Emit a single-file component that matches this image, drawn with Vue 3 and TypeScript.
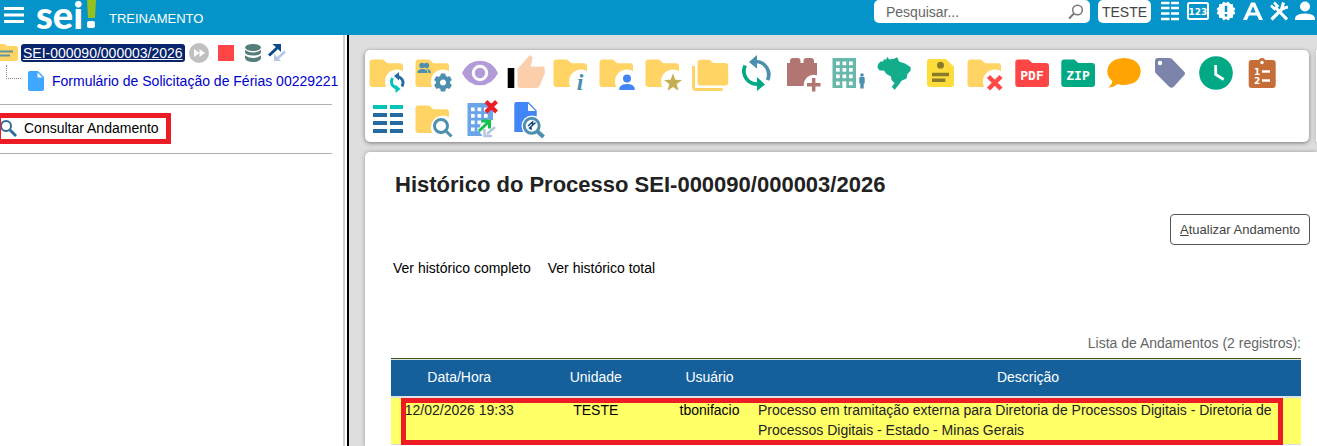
<script setup lang="ts">
import { ref } from 'vue'

interface HistoryEntry {
  date: string
  unit: string
  user: string
  description: string
}

const search = ref('')

const entries: HistoryEntry[] = [
  {
    date: '12/02/2026 19:33',
    unit: 'TESTE',
    user: 'tbonifacio',
    description:
      'Processo em tramitação externa para Diretoria de Processos Digitais - Diretoria de Processos Digitais - Estado - Minas Gerais',
  },
]

const folder = 'M7.5 9.5h9.5q1.5 0 2.5 1.2l2.8 2.6H35q3 0 3 3V34q0 3-3 3H7.5q-3 0-3-3V12.500q0-3 3-3z'

const gearTeeth = [0, 60, 120, 180, 240, 300]
const sealTeeth = [0, 30, 60]
const windowRows = [11.500, 18, 24.500, 31.500]
const windowCols = [11, 17.500, 24]

const tools: string[] = [
  'Iniciar Processo Relacionado',
  'Consultar/Alterar Processo',
  'Acompanhamento Especial',
  'Ciência',
  'Informações',
  'Atribuir Processo',
  'Favoritos',
  'Duplicar Processo',
  'Atualizar Processo',
  'Adicionar Módulo',
  'Enviar Processo',
  'Processo Federal',
  'Anotações',
  'Concluir Processo',
  'Gerar PDF',
  'Gerar ZIP',
  'Comentários',
  'Marcadores',
  'Controle de Prazo',
  'Lista de Tarefas',
  'Controle de Processos',
  'Pesquisar no Processo',
  'Cancelar Tramitação Externa',
  'Consultar Tramitação',
]
</script>

<template>
  <div class="page">
    <header class="topbar">
      <button class="plain" type="button" aria-label="Menu">
        <svg width="20" height="18" viewBox="0 0 20 18"><path d="M0 2.500h20M0 9h20M0 15.500h20" stroke="#fff" stroke-width="3" /></svg>
      </button>
      <a class="logo" href="#" aria-label="sei!">
        <span class="logo-word">sei</span>
        <svg width="9" height="29" viewBox="0 0 9 29"><path d="M0 0h9l-1 18H1z" fill="#95c11f" /><rect y="21" width="8" height="7" rx="2" fill="#fff" /></svg>
      </a>
      <span class="env">TREINAMENTO</span>
      <form class="search" role="search" @submit.prevent>
        <input v-model="search" type="text" placeholder="Pesquisar..." aria-label="Pesquisar" />
        <button class="plain" type="submit" aria-label="Buscar">
          <svg width="16" height="16" viewBox="0 0 16 16" fill="none" stroke="#777"><circle cx="9.500" cy="6" r="4.800" stroke-width="1.500" /><path d="M6 9.500l-5 5" stroke-width="2" /></svg>
        </button>
      </form>
      <button class="unit" type="button">TESTE</button>
      <nav class="top-icons">
        <button class="plain" type="button" aria-label="Controle de Processos">
          <svg width="19" height="20" viewBox="0 0 19 20"><path d="M0 2h8.500M10 2H18M0 7h8.500M10 7H18M0 12.500h8.500M10 12.500H18M0 18h8.500M10 18H18" stroke="#fff" stroke-width="2.600" /></svg>
        </button>
        <button class="plain" type="button" aria-label="Numeração">
          <svg width="22" height="20" viewBox="0 0 22 20"><rect x="1" y="2" width="20" height="16" rx="1.500" fill="none" stroke="#fff" stroke-width="2" /><text x="11" y="13.500" text-anchor="middle" class="digits">123</text></svg>
        </button>
        <button class="plain" type="button" aria-label="Novidades">
          <svg width="20" height="20" viewBox="0 0 20 20" fill="#fff"><rect v-for="a in sealTeeth" :key="a" x="3" y="3" width="14" height="14" rx="1" :transform="`rotate(${a} 10 10)`" /><path d="M10 4.800v6.200M10 13v2.500" stroke="#0494c9" stroke-width="2.500" /></svg>
        </button>
        <button class="plain" type="button" aria-label="Acessibilidade">
          <svg width="20" height="20" viewBox="0 0 20 20" fill="#fff"><path d="M8 1.500h4L20 19h-4l-2-4.500H6L4 19H0zM10 5.200L7.300 11.500h5.400z" fill-rule="evenodd" /></svg>
        </button>
        <button class="plain" type="button" aria-label="Configurações">
          <svg width="18" height="20" viewBox="0 0 18 20" fill="none" stroke="#fff"><path d="M5 6l12 12.500" stroke-width="3.200" /><path d="M1.500 18.500L13.500 6.500" stroke-width="3.200" /><path d="M1 4.500l3.500 3.500 3-3L4 1.500" stroke-width="2.500" /><path d="M13.500 1.500l-1.500 5 1 1 5-1.500" stroke-width="3" /></svg>
        </button>
        <button class="plain" type="button" aria-label="Usuário">
          <svg width="20" height="20" viewBox="0 0 20 20" fill="#fff"><circle cx="10" cy="5.500" r="5" /><path d="M0 19v-2Q1 12.500 10 12.500t10 4.500v2z" /></svg>
        </button>
      </nav>
    </header>

    <div class="body">
      <aside class="tree">
        <div class="process">
          <svg width="18" height="18" viewBox="0 0 18 18"><path d="M0 0h5l2 2h9q2 0 2 2v11q0 2-2 2H0z" fill="#ffd464" /><path d="M0 7.500h13M0 11.500h10" stroke="#5b93a8" stroke-width="2" /></svg>
          <a class="process-link" href="#">SEI-000090/000003/2026</a>
          <svg width="20" height="20" viewBox="0 0 20 20"><circle cx="10" cy="10" r="10" fill="#c0c0c0" /><path d="M5 6l5.500 4L5 14zM10.500 6l5.500 4-5.500 4z" fill="#fff" /></svg>
          <i class="stop"></i>
          <svg width="16" height="18" viewBox="0 0 16 18" fill="#557d79"><ellipse cx="8" cy="3.500" rx="8" ry="3.500" /><path d="M0 6q8 5 16 0v2.500q-1 3-8 3t-8-3zM0 11.500q8 5 16 0V14q-1 4-8 4t-8-4z" /></svg>
          <svg width="18" height="19" viewBox="0 0 18 19" fill="none"><path d="M17 8.500L9 16" stroke="#b4c6e2" stroke-width="2.500" /><path d="M6 18v-7l7 7z" fill="#b4c6e2" /><path d="M1 12.500l9-8.500" stroke="#0c4a8c" stroke-width="3" /><path d="M4.500 1H13v8z" fill="#0c4a8c" /></svg>
        </div>
        <div class="document">
          <i class="branch"></i>
          <svg width="16" height="20" viewBox="0 0 16 20"><path d="M2 0h8l6 6v12q0 2-2 2H2q-2 0-2-2V2q0-2 2-2z" fill="#3fa7ff" /><path d="M9.500 1.500v5h5z" fill="#fff" /></svg>
          <a href="#">Formulário de Solicitação de Férias 00229221</a>
        </div>
        <div class="consult">
          <a class="consult-link" href="#">
            <svg width="16" height="17" viewBox="0 0 16 17" fill="none" stroke="#2a6a9e"><circle cx="5" cy="6" r="5" stroke-width="2" /><path d="M9 10l6 6" stroke-width="2.800" /></svg>
            <span>Consultar Andamento</span>
          </a>
        </div>
      </aside>

      <main class="content">
        <div class="bars">
          <div class="toolbar">
            <button v-for="(label, n) in tools" :key="label" class="plain tool" type="button" :aria-label="label">
              <svg width="46" height="46" viewBox="0 0 46 46">
                <g v-if="[0, 1, 4, 5, 6, 13, 21].includes(n)">
                  <path :d="folder" fill="#ffd464" />
                  <circle cx="32" cy="31.500" r="12" fill="#fff" />
                </g>
                <g v-if="n === 0" fill="none" stroke-width="2.800">
                  <path d="M27.500 28q-3.500 7 4.500 10.500" stroke="#00c4b8" /><path d="M30.500 34.500v8.500l5-4z" fill="#00c4b8" />
                  <path d="M37 36.500q3.500-7-4.500-10.500" stroke="#246ba3" /><path d="M34 22v8.500l-5-4.500z" fill="#246ba3" />
                </g>
                <g v-else-if="n === 1" fill="#4c8fae">
                  <circle cx="11" cy="15.500" r="2.700" /><circle cx="15.500" cy="15.500" r="2.700" />
                  <path d="M6.500 23v-1.500q1-2.500 5-2.500t5 2.500V23zM15.500 18.800q4 .5 4.500 4.200h-2.500q0-3-2-4.200z" />
                  <rect v-for="a in gearTeeth" :key="a" x="29.500" y="23.500" width="5" height="6" rx="1" :transform="`rotate(${a} 32 32.500)`" />
                  <circle cx="32" cy="32.500" r="5.200" fill="none" stroke="#4c8fae" stroke-width="4" />
                </g>
                <g v-else-if="n === 2">
                  <path d="M5 23Q11 10.800 23 10.800T41 23Q35 35.300 23 35.300T5 23z" fill="#b39ad8" />
                  <circle cx="23" cy="23" r="6.700" fill="#b39ad8" stroke="#fff" stroke-width="3" />
                </g>
                <g v-else-if="n === 3">
                  <path d="M4.700 18h6.600v20H4.700z" />
                  <path d="M14.500 19L26 6q1-1.500 2.500 0 1.500 1 1 3l-2 7.500H39q3 0 2.800 3v4L36.500 36q-1 2-3 2H17.500q-3 0-3-3z" fill="#fccfac" />
                </g>
                <text v-else-if="n === 4" x="31" y="40" text-anchor="middle" class="info">i</text>
                <g v-else-if="n === 5" fill="#4285f4"><circle cx="32" cy="28.500" r="4" /><path d="M24.300 40v-2q1.500-4 7.700-4t7.700 4v2z" /></g>
                <path v-else-if="n === 6" d="M32 23.300l2.300 6.500 6.700.2-5.300 4.100 1.800 6.600-5.500-3.800-5.500 3.800 1.800-6.600L23 30l6.700-.2z" fill="#c4af55" />
                <g v-else-if="n === 7">
                  <path d="M6.500 16v21q0 2.500 2.500 2.500h26.500" fill="none" stroke="#ffd464" stroke-width="3" />
                  <path d="M13.500 9.700h8q1.500 0 2.500 1.200l2 2h12.200q3 0 3 3v16.600q0 3-3 3H13.500q-3 0-3-3V12.700q0-3 3-3z" fill="#ffd464" />
                </g>
                <g v-else-if="n === 8" fill="none" stroke-width="3.700">
                  <path d="M12.200 15.500A13 13 0 0 0 25 34" stroke="#00a884" /><path d="M24 27v14l8-6.500z" fill="#00a884" />
                  <path d="M23 11.500A13 13 0 0 1 34.500 30" stroke="#4c8fae" /><path d="M24 5v13.700l-8-6.700z" fill="#4c8fae" />
                </g>
                <g v-else-if="n === 9">
                  <path d="M8 13h3v-2q0-3 3-3h4.500q3 0 3 3v2h3v-2q0-3 3-3H32q3 0 3 3v2h3v23H8z" fill="#b17572" />
                  <circle cx="34.700" cy="34.700" r="10" fill="#fff" /><path d="M34.700 28v13.500M28 34.700h13.500" stroke="#b17572" stroke-width="3.500" />
                </g>
                <g v-else-if="n === 10">
                  <path d="M7.500 8H31v30H7.500z" fill="#67b7ab" />
                  <g fill="#fff">
                    <template v-for="y in windowRows" :key="y"><rect v-for="x in windowCols" :key="x" :x="x" :y="y" width="3.700" height="3.700" /></template>
                    <path d="M17.500 31.500h3.700V38h-3.700z" />
                  </g>
                  <circle cx="37" cy="25" r="1.800" fill="#4c8fae" /><path d="M34.300 28q0-1 1-1h3.400q1 0 1 1v5.500h-1v5h-3.400v-5h-1z" fill="#4c8fae" />
                </g>
                <path v-else-if="n === 11" d="M7.300 14L9.500 11.500 12.300 11.500 12.500 9.500 15 9.500 16.700 6.700 18 9.500 23 8.700 26.300 7.300 28 11.500 34 13.500 39.500 17 39.700 20.500 36.500 24 35.500 28.500 30.500 30.800 28 34.500 23.700 39.700 20.700 36.700 23.500 33.300 20.500 30 20 26.500 15.500 24 12.800 20.500 8.500 20.500 6.300 17.300z" fill="#13ad8c" />
                <g v-else-if="n === 12">
                  <path d="M13 9h16l8 8v17q0 3-3 3H13q-3 0-3-3V12q0-3 3-3z" fill="#fddc3c" />
                  <circle cx="23.500" cy="15.300" r="3.500" fill="#8a7b2b" /><path d="M15 24.500h17M15 30.300h13.300" stroke="#8a7b2b" stroke-width="3.500" />
                </g>
                <path v-else-if="n === 13" d="M25.500 26.500l12.500 12.500M38 26.500L25.500 39" stroke="#ff4a48" stroke-width="4.500" />
                <g v-else-if="n === 14 || n === 15">
                  <path d="M9.300 9.500h10l4 3.500H37q3 0 3 3v18q0 3-3 3H9.300q-3 0-3-3V12.500q0-3 3-3z" :fill="n === 14 ? '#ff4545' : '#00a884'" />
                  <text x="23" y="30" text-anchor="middle" class="file-type">{{ n === 14 ? 'PDF' : 'ZIP' }}</text>
                </g>
                <path v-else-if="n === 16" d="M7 37.500q4-2.500 4.300-6.500-5-4-5-9.500Q7 9 23 8q16 1 16.700 13.500Q39 34 23 35q-4 0-6.500-1-4 3.500-9.500 3.500z" fill="#ffa400" />
                <g v-else-if="n === 17"><path d="M11 8h11q2 0 3 1l12 12.500q2 2 0 4L26.500 37q-2 1.500-4 0L9 23.500Q8 22.500 8 21V11q0-3 3-3z" fill="#7c84ab" /><circle cx="13" cy="13" r="2.200" fill="#fff" /></g>
                <g v-else-if="n === 18"><circle cx="23" cy="23" r="16.800" fill="#00a884" /><path d="M22.700 15v9.500l8 5" fill="none" stroke="#fff" stroke-width="2.800" /></g>
                <g v-else-if="n === 19">
                  <circle cx="23" cy="11.500" r="3.500" fill="#c56e38" /><rect x="9.700" y="10" width="27" height="28" rx="3" fill="#c56e38" /><circle cx="23" cy="12.500" r="1.700" fill="#fff" />
                  <path d="M23 21.500h8M23 30.500h8" stroke="#fff" stroke-width="2.500" />
                  <text x="15" y="25" class="list-digit">1</text><text x="15" y="34" class="list-digit">2</text>
                </g>
                <g v-else-if="n === 20" stroke-width="4"><path d="M8 11h14M25 11h13" stroke="#00c4b8" /><path d="M8 19h14M25 19h13M8 27h14M25 27h13M8 35h14M25 35h13" stroke="#246ba3" /></g>
                <path v-else-if="n === 21" d="M34.500 34.500l6 6M36.500 30a6.500 6.500 0 1 1-13 0 6.500 6.500 0 0 1 13 0z" fill="none" stroke="#4c8fae" stroke-width="3" />
                <g v-else-if="n === 22">
                  <path d="M10.500 7H36v33H10.500z" fill="#6aa5e8" />
                  <g fill="#fff"><template v-for="y in windowRows" :key="y"><rect v-for="x in windowCols" :key="x" :x="x + 3" :y="y" width="3.700" height="3.700" /></template></g>
                  <circle cx="32" cy="33" r="9.500" fill="#fff" />
                  <path d="M38 31L30 38M27.500 33v7h7.500" fill="none" stroke="#b4c6e2" stroke-width="2.500" /><path d="M22 35l9.500-9M24.500 25h8v7.500" fill="none" stroke="#12c24e" stroke-width="3" />
                  <path d="M29 5.500L39.500 16M39.500 5.500L29 16" stroke="#ed1c24" stroke-width="4" />
                </g>
                <g v-else-if="n === 23">
                  <path d="M13 6h12.500l8.200 8.500V36H11.300V8q0-2 1.700-2z" fill="#4285f4" /><path d="M25 7.500v7.500h7.500z" fill="#fff" />
                  <circle cx="29" cy="30" r="10.500" fill="#fff" /><path d="M34 35l6.500 6" stroke="#4c8fae" stroke-width="4" />
                  <circle cx="28.700" cy="29.800" r="7.500" fill="#fff" stroke="#4c8fae" stroke-width="3" />
                  <path d="M25 30l4.500-4v3.500M28 34v-3.500l4.500-4M26 32.500l6-5.500" fill="none" stroke="#154b80" stroke-width="1.500" />
                </g>
              </svg>
            </button>
          </div>
          <div class="side-panel"></div>
        </div>

        <section class="history">
          <h1>Histórico do Processo SEI-000090/000003/2026</h1>
          <div class="commands"><button class="refresh" type="button" accesskey="a"><u>A</u>tualizar Andamento</button></div>
          <div class="views"><a href="#">Ver histórico completo</a><a href="#">Ver histórico total</a></div>
          <div class="grid">
            <table>
              <caption>Lista de Andamentos (2 registros):</caption>
              <thead>
                <tr><th class="wide">Data/Hora</th><th class="wide">Unidade</th><th class="narrow">Usuário</th><th>Descrição</th></tr>
              </thead>
              <tbody>
                <tr v-for="entry in entries" :key="entry.date">
                  <td>{{ entry.date }}</td>
                  <td><a href="#">{{ entry.unit }}</a></td>
                  <td><a href="#">{{ entry.user }}</a></td>
                  <td class="description">{{ entry.description }}</td>
                </tr>
              </tbody>
            </table>
            <div class="highlight"></div>
          </div>
        </section>
      </main>
    </div>
  </div>
</template>

<style>
body {
  margin: 0;
  overflow: hidden;
}
</style>

<style scoped>
.page {
  display: flex;
  flex-direction: column;
  min-height: 100vh;
  font: 14px/20px "Liberation Sans", Arial, sans-serif;
  color: #222;
}
.page * {
  box-sizing: border-box;
}
a {
  color: #000;
  text-decoration: none;
}
svg {
  display: block;
  flex: none;
}
.plain {
  padding: 0;
  border: 0;
  background: none;
  cursor: pointer;
}
.topbar {
  display: flex;
  align-items: flex-start;
  height: 35px;
  padding: 0 2px 0 4px;
  background: #0494c9;
}
.topbar > .plain {
  margin-top: 6px;
}
.logo {
  display: flex;
  width: 60px;
  margin-left: 12px;
  justify-content: space-between;
}
.logo-word {
  color: #fff;
  font: 900 38px/28px Lato, sans-serif;
}
.env {
  margin: 9px auto 0 13px;
  color: #fff;
  font-size: 13px;
}
.search {
  display: flex;
  align-items: center;
  width: 216px;
  height: 23px;
  padding: 0 6px 0 12px;
  border-radius: 5px;
  background: #fff;
}
.search input {
  flex: 1;
  min-width: 0;
  padding: 0;
  border: 0;
  outline: 0;
  background: none;
  font: inherit;
}
.search input::placeholder {
  color: #666;
}
.unit {
  width: 53px;
  height: 23px;
  margin-left: 8px;
  padding: 0;
  border: 0;
  border-radius: 5px;
  background: #fff;
  color: #444;
  font: inherit;
}
.top-icons {
  display: flex;
  gap: 7px;
  margin: 1px 0 0 10px;
}
.digits {
  fill: #fff;
  font: bold 9px "DejaVu Sans", sans-serif;
}
.body {
  display: flex;
  flex: 1;
}
.tree {
  flex: none;
  width: 343px;
  margin-right: 4px;
  padding-top: 7px;
  border-right: 1px solid #fff;
  box-shadow: 2px 0 0 #d4d0c8;
  white-space: nowrap;
}
.process {
  display: flex;
  align-items: center;
  height: 21px;
}
.process-link {
  margin: 0 4px 0 3px;
  padding: 0 2px;
  border-radius: 3px;
  background: #08246b;
  color: #fff;
  line-height: 18px;
  text-decoration: underline;
}
.stop {
  width: 16px;
  height: 16px;
  margin: 0 11px 0 9px;
  background: #ff4545;
}
.process svg:last-child {
  margin-left: 7px;
}
.document {
  display: flex;
  align-items: center;
  height: 36px;
  padding-left: 6px;
}
.document a {
  margin-left: 8px;
  color: #00c;
}
.branch {
  align-self: flex-start;
  width: 15px;
  height: 14px;
  margin: 2px 7px 0 0;
  border: dotted #888;
  border-width: 0 0 1px 1px;
}
.consult {
  width: 332px;
  margin-top: 5px;
  padding: 8px 0 9px;
  border: solid #b0b0b0;
  border-width: 1px 0;
}
.consult-link {
  display: flex;
  align-items: center;
  gap: 7px;
  width: 171px;
  height: 31px;
  padding-bottom: 1px;
  border: 5px solid #ed1c24;
  border-left-width: 1px;
}
.content {
  display: flex;
  flex: 1;
  flex-direction: column;
  min-width: 0;
  gap: 10px;
  padding: 15px 0 0 16px;
  border-left: 2px solid #000;
  background: #dedede;
}
.bars {
  display: flex;
  gap: 7px;
}
.toolbar {
  display: flex;
  flex: 1;
  flex-wrap: wrap;
}
.toolbar,
.side-panel {
  border-radius: 5px;
  background: #fff;
  box-shadow: 0 1px 4px #777;
}
.side-panel {
  width: 1px;
  border-radius: 5px 0 0 5px;
}
.tool {
  width: 46px;
  height: 46px;
}
.info {
  fill: #4c8fae;
  font: italic bold 24px "Liberation Serif", serif;
}
.file-type {
  fill: #fff;
  font: bold 13px "DejaVu Sans Mono", monospace;
}
.list-digit {
  fill: #fff;
  font: bold 9px "DejaVu Sans", sans-serif;
}
.history {
  flex: 1;
  padding: 20px 16px 0 26px;
  border-radius: 5px 0 0 0;
  background: #fff;
  box-shadow: 0 0 4px #999;
}
h1 {
  margin: 0 4px;
  font-size: 22px;
  line-height: 26px;
}
.commands {
  display: flex;
  justify-content: flex-end;
  margin: 16px -9px 0 0;
}
.refresh {
  height: 31px;
  padding: 0 9px;
  border: 1px solid #555;
  border-radius: 4px;
  background: #fff;
  color: #444;
  font: 13px "Liberation Sans", Arial, sans-serif;
}
.views {
  display: flex;
  gap: 17px;
  padding: 13px 2px 0;
}
.grid {
  position: relative;
  margin-top: 55px;
}
table {
  width: 100%;
  border-collapse: collapse;
  table-layout: fixed;
}
caption {
  padding-bottom: 5px;
  border-bottom: 1px solid #3d5a12;
  color: #666;
  text-align: right;
}
th {
  height: 37px;
  padding: 0 0 1px;
  border-bottom: 2px solid #dde3e8;
  background: #155f9b;
  color: #fff;
  font-weight: 400;
}
thead {
  border-top: 1px solid #dde3e8;
}
.wide {
  width: 15%;
}
.narrow {
  width: 10%;
}
td {
  padding: 2px 3px 4px;
  border-bottom: 1px solid #ddd;
  background: #ff6;
  text-align: center;
  vertical-align: top;
}
.description {
  text-align: left;
}
.highlight {
  position: absolute;
  right: 18px;
  bottom: 0;
  left: 10px;
  height: 47px;
  border: 5px solid #ed1c24;
  pointer-events: none;
}
</style>
